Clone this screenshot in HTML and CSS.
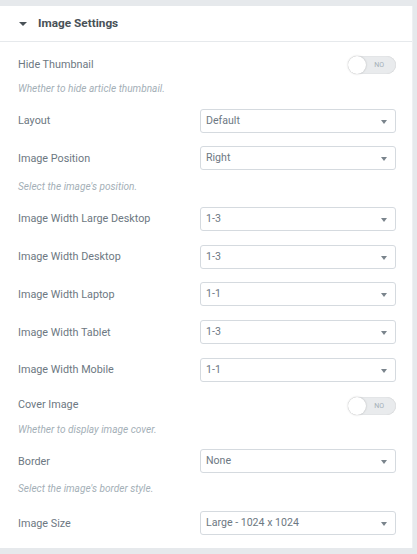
FILE: index.html
```html
<!DOCTYPE html>
<html>
<head>
<meta charset="utf-8">
<link rel="stylesheet" href="styles.css">
</head>
<body>
<div class="panel">
  <div class="header">
    <span class="caret"></span>
    <span class="title">Image Settings</span>
  </div>
  <div class="content">
    <div class="row toggle-row first">
      <span class="label">Hide Thumbnail</span>
      <span class="switch"><span class="knob"></span><span class="no">NO</span></span>
    </div>
    <div class="desc d1">Whether to hide article thumbnail.</div>

    <div class="row sel-row after-desc">
      <span class="label">Layout</span>
      <span class="select">Default<span class="arrow"></span></span>
    </div>
    <div class="row sel-row">
      <span class="label">Image Position</span>
      <span class="select">Right<span class="arrow"></span></span>
    </div>
    <div class="desc d2">Select the image's position.</div>

    <div class="row sel-row after-desc">
      <span class="label">Image Width Large Desktop</span>
      <span class="select">1-3<span class="arrow"></span></span>
    </div>
    <div class="row sel-row">
      <span class="label">Image Width Desktop</span>
      <span class="select">1-3<span class="arrow"></span></span>
    </div>
    <div class="row sel-row">
      <span class="label">Image Width Laptop</span>
      <span class="select">1-1<span class="arrow"></span></span>
    </div>
    <div class="row sel-row">
      <span class="label">Image Width Tablet</span>
      <span class="select">1-3<span class="arrow"></span></span>
    </div>
    <div class="row sel-row">
      <span class="label">Image Width Mobile</span>
      <span class="select">1-1<span class="arrow"></span></span>
    </div>

    <div class="row toggle-row after-sel">
      <span class="label">Cover Image</span>
      <span class="switch"><span class="knob"></span><span class="no">NO</span></span>
    </div>
    <div class="desc d1">Whether to display image cover.</div>

    <div class="row sel-row after-desc">
      <span class="label">Border</span>
      <span class="select">None<span class="arrow"></span></span>
    </div>
    <div class="desc d3">Select the image's border style.</div>

    <div class="row sel-row after-desc2">
      <span class="label">Image Size</span>
      <span class="select">Large - 1024 x 1024<span class="arrow"></span></span>
    </div>
  </div>
</div>
</body>
</html>
```

FILE: styles.css
```css
html, body {
  margin: 0;
  padding: 0;
}
body {
  background: #e6e9ec;
  font-family: Roboto, "Liberation Sans", sans-serif;
  width: 417px;
  height: 554px;
  padding-top: 6px;
  box-sizing: border-box;
}
.panel {
  width: 413px;
  background: #fff;
  border-right: 1px solid #eef0f2;
  box-sizing: border-box;
  height: 542px;
}
.header {
  height: 35px;
  border-bottom: 1px solid #e6e9ec;
  display: flex;
  align-items: center;
  padding-left: 19px;
}
.caret {
  width: 0;
  height: 0;
  border-left: 4px solid transparent;
  border-right: 4px solid transparent;
  border-top: 4px solid #495157;
  margin-right: 11px;
  margin-top: 0;
}
.title {
  font-size: 11.8px;
  font-weight: 700;
  color: #495157;
  margin-top: -1px;
}
.content {
  padding: 0 16px 0 18px;
}
.row {
  display: flex;
  align-items: center;
  justify-content: space-between;
  height: 24px;
}
.first { margin-top: 10px; }
.label {
  font-size: 10.8px;
  color: #6d7882;
}
.sel-row { margin-top: 13.75px; }
.after-desc { margin-top: 12.5px; }
.after-desc2 { margin-top: 15px; }
.after-sel { margin-top: 11px; }
.desc {
  font-size: 10.1px;
  font-style: italic;
  color: #a4afb7;
  height: 14px;
  line-height: 14px;
}
.d1 { margin-top: 6px; }
.d2 { margin-top: 10px; }
.d3 { margin-top: 9px; }
.select {
  position: relative;
  width: 196px;
  height: 24px;
  box-sizing: border-box;
  border: 1px solid #d5dadf;
  border-radius: 3px;
  font-size: 10.6px;
  color: #6d7882;
  line-height: 22px;
  padding-left: 5px;
}
.arrow {
  position: absolute;
  right: 8px;
  top: 10px;
  width: 0;
  height: 0;
  border-left: 3.5px solid transparent;
  border-right: 3.5px solid transparent;
  border-top: 4px solid #7a848c;
}
.switch {
  position: relative;
  width: 48px;
  height: 18px;
  border-radius: 9px;
  background: #e9ebed;
  box-shadow: inset 0 0 1px rgba(0,0,0,0.25);
  display: flex;
  align-items: center;
  justify-content: flex-end;
  margin-top: 2px;
}
.knob {
  position: absolute;
  left: 0;
  top: 0;
  width: 18px;
  height: 18px;
  border-radius: 50%;
  background: #fff;
  box-shadow: 0 0 2px rgba(0,0,0,0.25);
}
.no {
  font-size: 7px;
  color: #a4afb7;
  margin-right: 12px;
}
```
